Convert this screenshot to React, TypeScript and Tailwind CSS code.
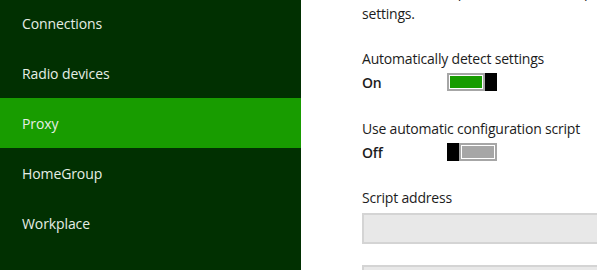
import React from "react";

const menus = ["Connections", "Radio devices", "Proxy", "HomeGroup", "Workplace"];

const Toggle = ({ on }: { on: boolean }) => (
  <div className="flex h-[18px] w-[50px]">
    {!on && <div className="h-full w-[12px] bg-black" />}
    <div className="flex-1 border-2 border-[#a6a6a6] p-[1px]">
      <div className={on ? "h-full bg-[#179c00]" : "h-full bg-[#a6a6a6]"} />
    </div>
    {on && <div className="h-full w-[12px] bg-black" />}
  </div>
);

export default function App() {
  return (
    <div
      className="flex h-[270px] w-[597px] overflow-hidden bg-white"
      style={{ fontFamily: '"Open Sans", "Noto Sans", sans-serif' }}
    >
      {/* Sidebar */}
      <div className="w-[301px] shrink-0 bg-[#013001] text-[14px] tracking-[-0.1px] text-[#e6eee6]">
        <ul className="mt-[-2px]">
          {menus.map((m) => (
            <li
              key={m}
              className={`flex h-[50px] items-center pl-[22px] ${
                m === "Proxy" ? "bg-[#189c00]" : ""
              }`}
            >
              {m}
            </li>
          ))}
        </ul>
      </div>

      {/* Content */}
      <div className="flex-1 whitespace-nowrap pl-[61px] text-[14px] tracking-[-0.2px] text-[#1c1c1c]">
        <p className="mt-[-19px] leading-[22px]">
          Automatic setup overrides manual proxy
          <br />
          settings.
        </p>

        <div className="mt-[23px] leading-[22px]">Automatically detect settings</div>
        <div className="flex h-[24px] items-center">
          <span className="w-[85px] font-semibold">On</span>
          <Toggle on />
        </div>

        <div className="mt-[24px] leading-[22px]">Use automatic configuration script</div>
        <div className="flex h-[24px] items-center">
          <span className="w-[85px] font-semibold">Off</span>
          <Toggle on={false} />
        </div>

        <div className="mt-[23px] leading-[22px]">Script address</div>
        <div className="mt-[4px] h-[31px] border-2 border-[#d4d4d4] bg-[#e8e8e8]" />
        <div className="mt-[21px] h-[31px] border-2 border-[#d4d4d4] bg-[#e8e8e8]" />
      </div>
    </div>
  );
}
